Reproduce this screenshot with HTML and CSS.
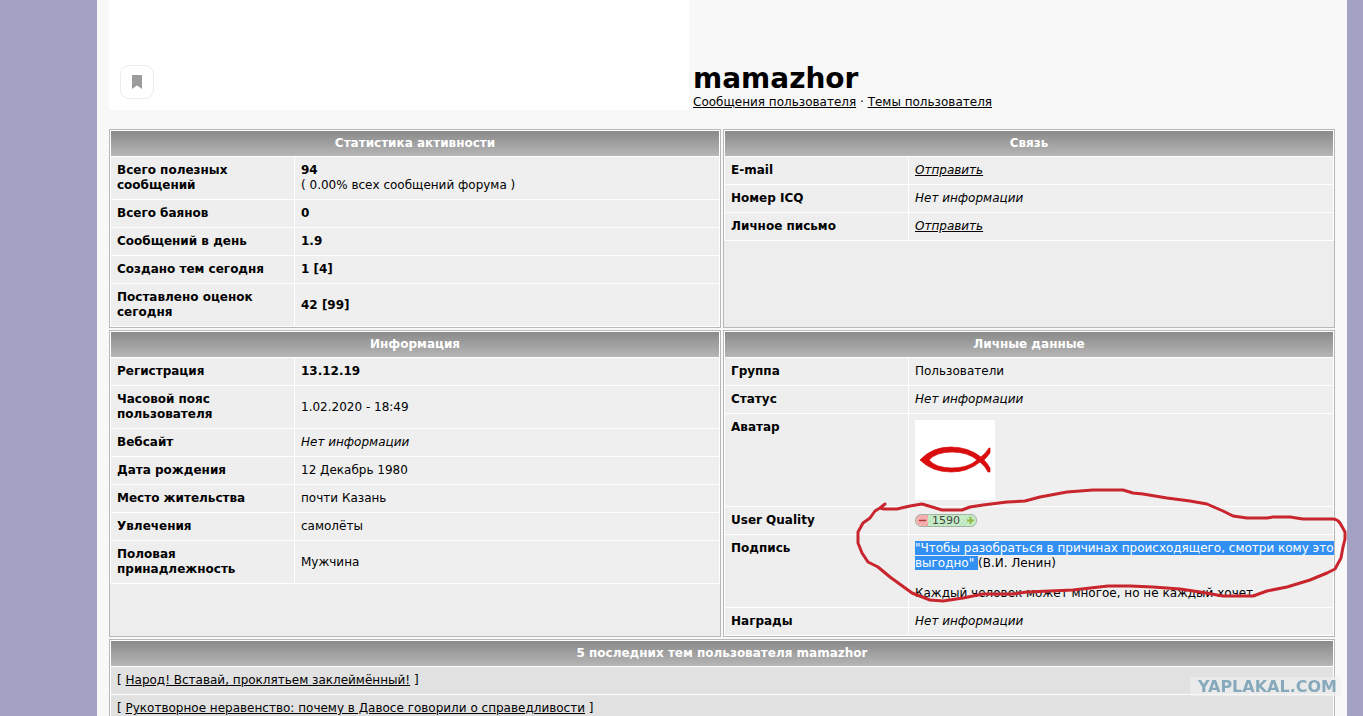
FILE: index.html
```html
<!DOCTYPE html>
<html lang="ru">
<head>
  <meta charset="UTF-8" />
  <meta name="viewport" content="width=device-width, initial-scale=1.0" />
  <title>mamazhor</title>
  <link rel="stylesheet" href="styles.css">
</head>
<body>
  <div class="page">
    <header class="profile-head">
      <div class="photo">
        <button class="bookmark" type="button" aria-label="Закладка">
          <svg width="10" height="14" viewBox="0 0 10 14"><path d="M0 0h10v14L5 10.500 0 14z" fill="#9c9c9c"/></svg>
        </button>
      </div>
      <div class="profile-title">
        <h1>mamazhor</h1>
        <div><a href="#posts">Сообщения пользователя</a> · <a href="#topics">Темы пользователя</a></div>
      </div>
    </header>

    <main class="panels">
      <section class="panel">
        <table>
          <colgroup><col class="name"><col></colgroup>
          <thead><tr><th colspan="2">Статистика активности</th></tr></thead>
          <tbody>
            <tr><th>Всего полезных сообщений</th><td><b>94</b><br>( 0.00% всех сообщений форума )</td></tr>
            <tr><th>Всего баянов</th><td><b>0</b></td></tr>
            <tr><th>Сообщений в день</th><td><b>1.9</b></td></tr>
            <tr><th>Создано тем сегодня</th><td><b>1 [4]</b></td></tr>
            <tr><th>Поставлено оценок сегодня</th><td><b>42 [99]</b></td></tr>
          </tbody>
        </table>
      </section>

      <section class="panel">
        <table>
          <colgroup><col class="name"><col></colgroup>
          <thead><tr><th colspan="2">Связь</th></tr></thead>
          <tbody>
            <tr><th>E-mail</th><td><i><a href="#mail">Отправить</a></i></td></tr>
            <tr><th>Номер ICQ</th><td><i>Нет информации</i></td></tr>
            <tr><th>Личное письмо</th><td><i><a href="#pm">Отправить</a></i></td></tr>
          </tbody>
        </table>
      </section>

      <section class="panel">
        <table>
          <colgroup><col class="name"><col></colgroup>
          <thead><tr><th colspan="2">Информация</th></tr></thead>
          <tbody>
            <tr><th>Регистрация</th><td><b>13.12.19</b></td></tr>
            <tr><th>Часовой пояс пользователя</th><td>1.02.2020 - 18:49</td></tr>
            <tr><th>Вебсайт</th><td><i>Нет информации</i></td></tr>
            <tr><th>Дата рождения</th><td>12 Декабрь 1980</td></tr>
            <tr><th>Место жительства</th><td>почти Казань</td></tr>
            <tr><th>Увлечения</th><td>самолёты</td></tr>
            <tr><th>Половая принадлежность</th><td>Мужчина</td></tr>
          </tbody>
        </table>
      </section>

      <section class="panel personal">
        <table>
          <colgroup><col class="name"><col></colgroup>
          <thead><tr><th colspan="2">Личные данные</th></tr></thead>
          <tbody>
            <tr><th>Группа</th><td>Пользователи</td></tr>
            <tr><th>Статус</th><td><i>Нет информации</i></td></tr>
            <tr class="top">
              <th>Аватар</th>
              <td>
                <svg class="avatar" width="80" height="80" viewBox="0 0 80 80">
                  <path d="M5 40Q17 27 36 27Q53 27 66 37Q71 33 74 28L75 28V33Q72 37 69 40Q73 44 75 48V52L73 52Q70 46 65 42Q53 52 36 52Q17 52 5 40ZM14 40Q21 48 37 48Q53 48 62 40Q53 32 37 32Q21 32 14 40Z" fill="#d90d0d" stroke="#d90d0d" stroke-width="0.700" fill-rule="evenodd"/>
                </svg>
              </td>
            </tr>
            <tr>
              <th>User Quality</th>
              <td>
                <span class="quality">
                  <button class="minus" type="button" aria-label="Понизить"><svg width="7" height="7" viewBox="0 0 7 7"><path d="M0 3.500h7" stroke="#b03a3a" stroke-width="1.500"/></svg></button>
                  <span>1590</span>
                  <button class="plus" type="button" aria-label="Повысить"><svg width="7" height="7" viewBox="0 0 7 7"><path d="M0 3.500h7M3.500 0v7" stroke="#93b845" stroke-width="2"/></svg></button>
                </span>
              </td>
            </tr>
            <tr class="top">
              <th>Подпись</th>
              <td class="signature"><mark>"Чтобы разобраться в причинах происходящего, смотри кому это<br>выгодно" </mark>(В.И. Ленин)<br><br>Каждый человек может многое, но не каждый хочет.</td>
            </tr>
            <tr><th>Награды</th><td><i>Нет информации</i></td></tr>
          </tbody>
        </table>
        <!-- hand-drawn circle round the signature -->
        <svg class="marker" width="500" height="130" viewBox="850 480 500 130">
          <path d="M885 504L880 508L884 509H897L910 506L922 504L942 510H962L970 507L983 505L1007 502L1025 501L1040 497L1067 492L1093 490H1123L1133 493L1143 494L1167 498L1190 501L1207 504L1223 511L1233 516L1247 518H1267L1273 517H1290L1303 519L1333 519Q1337 519 1340 523L1345 532V539L1343 547L1341 558L1335 569L1327 573L1310 580L1287 587L1267 591L1253 596H1223L1200 592L1180 589L1153 587L1130 586H1108L1073 590L1027 592L1013 594L983 594L963 598L943 601L930 600L912 593L890 577L878 567L868 562L862 553L858 543V532L863 523L870 518L875 511L880 508"/>
        </svg>
      </section>

      <section class="panel topics">
        <table>
          <thead><tr><th>5 последних тем пользователя mamazhor</th></tr></thead>
          <tbody>
            <tr><td>[ <a href="#t1">Народ! Вставай, проклятьем заклеймённый!</a> ]</td></tr>
            <tr><td>[ <a href="#t2">Рукотворное неравенство: почему в Давосе говорили о справедливости</a> ]</td></tr>
          </tbody>
        </table>
      </section>
    </main>
  </div>
  <div class="watermark">YAPLAKAL.COM</div>
</body>
</html>
```

FILE: styles.css
```css
body {
  margin: 0;
  background: #a4a2c4;
  color: #000;
  font-family: Verdana, "DejaVu Sans", sans-serif;
  font-size: 12px;
  line-height: 15px;
}

a {
  color: inherit;
}

button {
  padding: 0;
  border: none;
  background: none;
  cursor: pointer;
}

.page {
  margin: 0 16px 0 97px;
  padding: 0 12px;
  background: #f8f8f8;
}

.profile-head {
  display: flex;
  align-items: flex-end;
  gap: 4px;
  margin-bottom: 19px;
}

.photo {
  display: flex;
  align-items: flex-end;
  box-sizing: border-box;
  width: 580px;
  height: 110px;
  padding: 11px;
  background: #fff;
}

.bookmark {
  display: flex;
  align-items: center;
  justify-content: center;
  width: 34px;
  height: 34px;
  border: 1px solid #ececec;
  border-radius: 9px;
}

h1 {
  margin: 0;
  font-size: 28px;
  line-height: 32px;
}

.panels {
  display: grid;
  grid-template-columns: 1fr 1fr;
  gap: 2px;
}

.panel {
  border: 1px solid #b8b8b8;
  background: #ededed;
}

table {
  width: 100%;
  table-layout: fixed;
  background: #fff;
  border-spacing: 1px;
}

.name {
  width: 183px;
}

th, td {
  padding: 6px;
  background: #efefef;
  text-align: left;
}

td {
  padding-right: 0;
}

thead th {
  padding: 5px 6px;
  background: linear-gradient(#8a8a8a, #b6b6b6);
  color: #fff;
  text-align: center;
}

tbody th {
  background: #eee;
}

.top th, .top td {
  vertical-align: top;
}

.avatar {
  display: block;
  background: #fff;
}

.quality {
  display: flex;
  align-items: center;
  justify-content: space-between;
  box-sizing: border-box;
  width: 62px;
  height: 13px;
  margin: 1px 0;
  border: 1px solid #a5b5a5;
  border-radius: 6px;
  background: repeating-linear-gradient(135deg, #c8efc8 0 2px, #b9e2bd 2px 3px);
  color: #444;
  font-size: 11px;
  line-height: 11px;
  overflow: hidden;
}

.quality button {
  display: flex;
  align-items: center;
  justify-content: center;
  width: 12px;
  height: 11px;
}

.quality .minus {
  background: repeating-linear-gradient(135deg, #f8b4b4 0 2px, #eea0a0 2px 3px);
}

.signature {
  white-space: nowrap;
}

mark {
  background: #3390f3;
  color: #fff;
}

.personal {
  position: relative;
}

.marker {
  position: absolute;
  top: 149px;
  right: -16px;
  fill: none;
  stroke: #c9252d;
  stroke-width: 3;
  stroke-linecap: round;
  stroke-linejoin: round;
  pointer-events: none;
}

.topics {
  grid-column: 1 / -1;
}

.topics td {
  background: #e1e1e1;
}

.watermark {
  position: fixed;
  right: 22px;
  bottom: 20px;
  padding: 2px 4px 2px 8px;
  background: rgba(240, 240, 240, 0.6);
  color: #86aabc;
  font-size: 16px;
  font-weight: bold;
}
```
